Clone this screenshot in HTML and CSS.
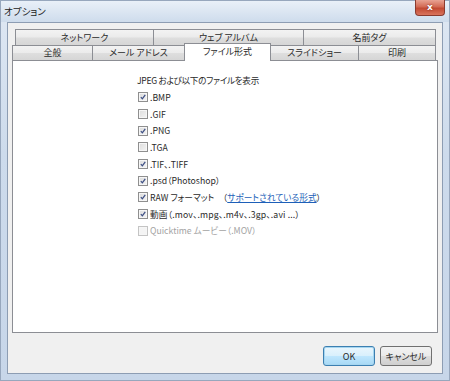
FILE: index.html
```html
<!DOCTYPE html>
<html lang="ja">
<head>
<meta charset="utf-8">
<title>オプション</title>
<link rel="stylesheet" href="styles.css">
</head>
<body>
<div class="window">
  <div class="titlebar">
    <span class="title">オプション</span>
    <span class="close">x</span>
  </div>
  <div class="client">
    <div class="tabs">
      <div class="row row1">
        <div class="tab w138">ネットワーク</div>
        <div class="tab w150">ウェブ アルバム</div>
        <div class="tab w133">名前タグ</div>
      </div>
      <div class="row row2">
        <div class="tab w80">全般</div>
        <div class="tab w92">メール アドレス</div>
        <div class="tab w86 active">ファイル形式</div>
        <div class="tab w88">スライドショー</div>
        <div class="tab w78">印刷</div>
      </div>
    </div>
    <div class="panel">
      <div class="heading">JPEG および以下のファイルを表示</div>
      <ul class="list">
        <li><span class="cb on"><svg viewBox="0 0 10 10"><path d="M2.3 5.2 L4.2 7.3 L7.8 2.4" /></svg></span>.BMP</li>
        <li><span class="cb"></span>.GIF</li>
        <li><span class="cb on"><svg viewBox="0 0 10 10"><path d="M2.3 5.2 L4.2 7.3 L7.8 2.4" /></svg></span>.PNG</li>
        <li><span class="cb"></span>.TGA</li>
        <li><span class="cb on"><svg viewBox="0 0 10 10"><path d="M2.3 5.2 L4.2 7.3 L7.8 2.4" /></svg></span>.TIF、.TIFF</li>
        <li><span class="cb on"><svg viewBox="0 0 10 10"><path d="M2.3 5.2 L4.2 7.3 L7.8 2.4" /></svg></span>.psd（Photoshop）</li>
        <li><span class="cb on"><svg viewBox="0 0 10 10"><path d="M2.3 5.2 L4.2 7.3 L7.8 2.4" /></svg></span>RAW フォーマット　（<a class="link" href="#">サポートされている形式</a>）</li>
        <li><span class="cb on"><svg viewBox="0 0 10 10"><path d="M2.3 5.2 L4.2 7.3 L7.8 2.4" /></svg></span><span class="wide">動画（.mov、.mpg、.m4v、.3gp、.avi ...）</span></li>
        <li class="disabled"><span class="cb"></span>Quicktime ムービー（.MOV）</li>
      </ul>
    </div>
    <div class="buttons">
      <button class="btn default">OK</button>
      <button class="btn">キャンセル</button>
    </div>
  </div>
</div>
</body>
</html>
```
FILE: styles.css
```css
* { box-sizing: border-box; }
html, body { margin: 0; padding: 0; }
body {
  width: 450px;
  height: 381px;
  overflow: hidden;
  font-family: "Noto Sans CJK JP", "Noto Sans", sans-serif;
  font-feature-settings: "palt";
  font-size: 9px;
  color: #2a2a2a;
}
.window {
  width: 450px;
  height: 381px;
  display: flex;
  flex-direction: column;
  background: linear-gradient(180deg, #dfe8f3 0%, #cddbec 40%, #c7d6e9 100%);
  border: 1px solid #97a7bd;
}
.titlebar {
  height: 21px;
  display: flex;
  justify-content: space-between;
  align-items: flex-start;
  padding: 0 4px 0 3px;
  background: linear-gradient(180deg, #e9f0f8 0%, #d9e4f1 60%, #cedcec 100%);
}
.title {
  font-size: 9.5px;
  line-height: 20px;
  color: #1b1b1b;
}
.close {
  width: 30px;
  height: 16px;
  margin-top: -1px;
  border: 1px solid #8a3b2f;
  border-top: none;
  border-radius: 0 0 4px 4px;
  background: linear-gradient(180deg, #e8a393 0%, #d36a54 45%, #c24a33 55%, #d9745d 100%);
  color: #fff;
  font-family: "DejaVu Sans", sans-serif;
  font-weight: bold;
  font-size: 9px;
  line-height: 14px;
  text-align: center;
  text-shadow: 0 0 2px #6d1a10;
}
.client {
  flex: none;
  height: 352px;
  margin: 0 6px 0 6px;
  background: #f0f0f0;
  border: 1px solid #8d9db3;
  display: flex;
  flex-direction: column;
}
.tabs {
  margin-top: 6px;
  display: flex;
  flex-direction: column;
  position: relative;
  z-index: 1;
}
.row { display: flex; }
.row1 { margin-left: 7px; height: 16px; }
.row2 { margin-left: 4px; height: 15px; }
.tab {
  flex: none;
  display: flex;
  align-items: center;
  justify-content: center;
  border: 1px solid #8c8e94;
  border-bottom: none;
  margin-right: -1px;
  background: linear-gradient(180deg, #f3f3f3 0%, #ebebeb 48%, #dedede 52%, #d6d6d6 100%);
  font-size: 9px;
  line-height: 12px;
  color: #2a2a2a;
}
.row2 .tab { border-top: 1px solid #8c8e94; }
.w138 { width: 139px; }
.w150 { width: 151px; }
.w133 { width: 133px; }
.w80 { width: 81px; }
.w92 { width: 93px; }
.w86 { width: 87px; }
.w88 { width: 89px; }
.w78 { width: 78px; }
.tab.active {
  background: #fff;
  height: 18px;
  margin-top: -2px;
  margin-bottom: -1px;
  position: relative;
  z-index: 2;
  padding-bottom: 2px;
}
.panel {
  margin-left: 4px;
  width: 426px;
  height: 273px;
  background: #fff;
  border: 1px solid #8c8e94;
  padding: 13px 0 0 124px;
}
.heading {
  font-size: 8.6px;
  letter-spacing: -0.3px;
  line-height: 12px;
  margin-bottom: 3px;
}
.list {
  list-style: none;
  margin: 0;
  padding: 0;
}
.list li {
  display: flex;
  align-items: center;
  height: 16.7px;
  font-size: 8.7px;
  white-space: nowrap;
}
.wide { letter-spacing: 0.15px; }
.cb {
  flex: none;
  width: 10px;
  height: 10px;
  margin: 0 2px 0 1px;
  border: 1px solid #8f8f8f;
  background: linear-gradient(135deg, #dcdcdc 0%, #f4f4f4 100%);
  box-shadow: inset 0 0 0 1px #f6f6f6;
  display: flex;
}
.cb svg {
  width: 8px;
  height: 8px;
  fill: none;
  stroke: #3d4f84;
  stroke-width: 1.6;
}
.disabled { color: #a3a3a3; }
.disabled .cb {
  border-color: #c4c4c4;
  background: #f4f4f4;
}
.link {
  color: #1d5fb8;
  text-decoration: underline;
}
.buttons {
  display: flex;
  justify-content: flex-end;
  gap: 5px;
  margin-top: 13px;
  padding-right: 10px;
}
.btn {
  width: 52px;
  height: 20px;
  padding: 0;
  border: 1px solid #707070;
  border-radius: 3px;
  background: linear-gradient(180deg, #f2f2f2 0%, #ebebeb 48%, #dddddd 52%, #cfcfcf 100%);
  font-family: "Noto Sans CJK JP", "Noto Sans", sans-serif;
  font-feature-settings: "palt";
  font-size: 9px;
  color: #2a2a2a;
}
.btn.default {
  border-color: #3c7fb1;
  box-shadow: inset 0 0 0 1px #a6d6f0;
  background: linear-gradient(180deg, #eaf6fd 0%, #d9f0fc 48%, #bee6fd 52%, #a7d9f5 100%);
}
```
